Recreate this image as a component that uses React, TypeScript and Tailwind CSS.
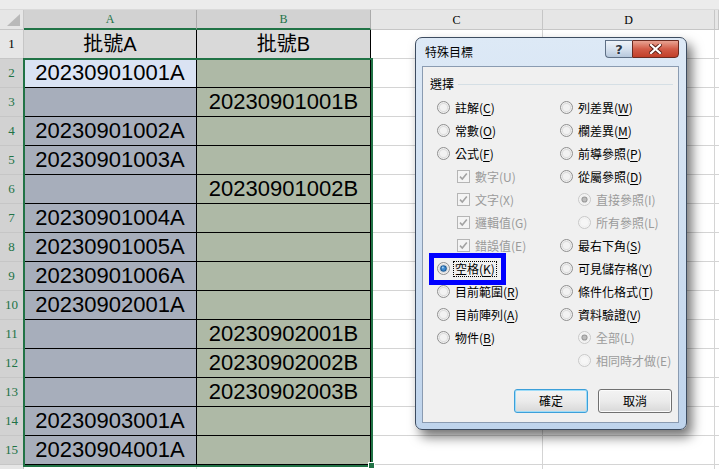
import React from "react";

const rows: [string, string][] = [
  ["批號A", "批號B"],
  ["20230901001A", ""],
  ["", "20230901001B"],
  ["20230901002A", ""],
  ["20230901003A", ""],
  ["", "20230901002B"],
  ["20230901004A", ""],
  ["20230901005A", ""],
  ["20230901006A", ""],
  ["20230902001A", ""],
  ["", "20230902001B"],
  ["", "20230902002B"],
  ["", "20230902003B"],
  ["20230903001A", ""],
  ["20230904001A", ""],
  ["", ""],
];

type Opt = {
  l: string;
  k: string;
  kind?: "radio" | "check";
  checked?: boolean;
  disabled?: boolean;
  indent?: boolean;
  focus?: boolean;
};

const leftOpts: Opt[] = [
  { l: "註解", k: "C" },
  { l: "常數", k: "O" },
  { l: "公式", k: "F" },
  { l: "數字", k: "U", kind: "check", checked: true, disabled: true, indent: true },
  { l: "文字", k: "X", kind: "check", checked: true, disabled: true, indent: true },
  { l: "邏輯值", k: "G", kind: "check", checked: true, disabled: true, indent: true },
  { l: "錯誤值", k: "E", kind: "check", checked: true, disabled: true, indent: true },
  { l: "空格", k: "K", checked: true, focus: true },
  { l: "目前範圍", k: "R" },
  { l: "目前陣列", k: "A" },
  { l: "物件", k: "B" },
];

const rightOpts: Opt[] = [
  { l: "列差異", k: "W" },
  { l: "欄差異", k: "M" },
  { l: "前導參照", k: "P" },
  { l: "從屬參照", k: "D" },
  { l: "直接參照", k: "I", disabled: true, checked: true, indent: true },
  { l: "所有參照", k: "L", disabled: true, indent: true },
  { l: "最右下角", k: "S" },
  { l: "可見儲存格", k: "Y" },
  { l: "條件化格式", k: "T" },
  { l: "資料驗證", k: "V" },
  { l: "全部", k: "L", disabled: true, checked: true, indent: true },
  { l: "相同時才做", k: "E", disabled: true, indent: true },
];

function Radio({ checked, disabled }: { checked?: boolean; disabled?: boolean }) {
  return (
    <svg width="13" height="13" viewBox="0 0 13 13" className="shrink-0">
      <circle cx="6.5" cy="6.5" r="6" fill={disabled ? "#f4f4f4" : "#f0f0f0"} stroke={disabled ? "#c8c8c8" : "#8f8f8f"} strokeWidth="1" />
      <circle cx="6.5" cy="6.5" r="4.6" fill={disabled ? "#f0f0f0" : "#dcdcdc"} />
      <circle cx="6.5" cy="6.5" r="3.6" fill={disabled ? "#f6f6f6" : "#f2f2f2"} />
      {checked && !disabled && (
        <>
          <circle cx="6.5" cy="6.5" r="3.3" fill="#1d5a94" />
          <circle cx="6.5" cy="6.5" r="2.2" fill="#3d8ad0" />
          <circle cx="5.8" cy="5.6" r="1" fill="#a9d3f5" />
        </>
      )}
      {checked && disabled && (
        <>
          <circle cx="6.5" cy="6.5" r="3.1" fill="#9a9a9a" />
          <circle cx="6.5" cy="6.5" r="2" fill="#bdbdbd" />
        </>
      )}
    </svg>
  );
}

function Check() {
  return (
    <svg width="13" height="13" viewBox="0 0 13 13" className="shrink-0">
      <rect x="0.5" y="0.5" width="12" height="12" fill="#f4f4f4" stroke="#b5b5b5" />
      <path d="M3 6.6 L5.3 9 L9.8 3.6" fill="none" stroke="#a3a3a3" strokeWidth="1.6" />
    </svg>
  );
}

function Option({ o, right }: { o: Opt; right?: boolean }) {
  const color = o.disabled ? "text-[#9b9b9b]" : "text-black";
  const indent = o.indent ? (right ? "pl-[18px]" : "pl-[20px]") : "";
  const label = (
    <span className={`${color} whitespace-nowrap`}>
      {o.l}(
      {o.disabled ? o.k : <span className="underline underline-offset-[2px]">{o.k}</span>})
    </span>
  );
  return (
    <div className={`h-[23px] flex items-center gap-[5px] ${indent}`}>
      {o.kind === "check" ? <Check /> : <Radio checked={o.checked} disabled={o.disabled} />}
      {o.focus ? (
        <span className="border border-dotted border-black px-[1px] leading-[14px] -ml-[2px]">{label}</span>
      ) : (
        label
      )}
    </div>
  );
}

function Button({ children, primary }: { children: React.ReactNode; primary?: boolean }) {
  return (
    <div
      className={`w-[74px] h-[24px] rounded-[3px] flex items-center justify-center text-[12px] text-black bg-gradient-to-b from-[#f3f3f3] via-[#ebebeb] to-[#d8d8d8] border ${
        primary ? "border-[#3c9fd9] shadow-[inset_0_0_0_1px_#9edcf8]" : "border-[#707070] shadow-[inset_0_0_0_1px_#fbfbfb]"
      }`}
    >
      {children}
    </div>
  );
}

function Dialog() {
  return (
    <div className="absolute left-[415px] top-[37px] w-[272px] h-[393px] rounded-[7px] border border-[#3d4c60] bg-gradient-to-b from-[#dde9f6] via-[#cfdff1] to-[#bfd4ec] shadow-[5px_7px_12px_rgba(0,0,0,0.55)] flex flex-col pl-[6px] pr-[7px] pb-[6px] font-['Noto_Sans_CJK_TC','Noto_Sans',sans-serif] text-[12px]">
      <div className="h-[28px] flex items-start justify-between">
        <div className="pl-[3px] pt-[6px] text-[12px] text-black leading-[16px]">特殊目標</div>
        <div className="flex mt-[2px]">
          <div className="w-[27px] h-[18px] rounded-bl-[4px] border border-[#5e6f85] border-r-0 bg-gradient-to-b from-[#eef3f9] via-[#d6e1ee] to-[#b7c8dc] flex items-center justify-center">
            <span className="font-['DejaVu_Sans',sans-serif] font-bold text-[13px] leading-none text-[#2e3744] [text-shadow:0_0_2px_#fff]">?</span>
          </div>
          <div className="w-[47px] h-[18px] rounded-br-[4px] border border-[#6a2a20] bg-gradient-to-b from-[#e8a393] via-[#d25c48] to-[#c13f29] flex items-center justify-center">
            <svg width="13" height="10" viewBox="0 0 13 10">
              <path d="M2 1 L11 9 M11 1 L2 9" stroke="#5a1f16" strokeWidth="4" strokeLinecap="square" />
              <path d="M2 1 L11 9 M11 1 L2 9" stroke="#ffffff" strokeWidth="2.2" strokeLinecap="square" />
            </svg>
          </div>
        </div>
      </div>
      <div className="flex-1 bg-[#f0f0f0] border border-[#8a9bb1] flex flex-col">
        <div className="pt-[9px] pl-[7px] pr-[5px] h-[25px] flex items-center gap-[4px]">
          <span className="text-black leading-[16px]">選擇</span>
          <div className="flex-1 h-px bg-[#d5dfe5]"></div>
        </div>
        <div className="mt-[4px] pl-[14px] grid grid-cols-[123px_1fr]">
          <div className="flex flex-col">
            {leftOpts.map((o, i) => (
              <Option key={i} o={o} />
            ))}
          </div>
          <div className="flex flex-col">
            {rightOpts.map((o, i) => (
              <Option key={i} o={o} right />
            ))}
          </div>
        </div>
        <div className="flex-1" />
        <div className="flex justify-end gap-[10px] pr-[6px] pb-[9px]">
          <Button primary>確定</Button>
          <Button>取消</Button>
        </div>
      </div>
    </div>
  );
}

export default function App() {
  const hdrFont = "font-['Liberation_Serif',serif]";
  return (
    <div className="relative w-[719px] h-[469px] overflow-hidden bg-white font-['Liberation_Sans','Noto_Sans_CJK_TC',sans-serif]">
      <div className="h-[10px] bg-[#ececec] border-b border-[#dadada]" />
      <div className="grid grid-cols-[24px_173px_174px_172px_172px_4px] grid-rows-[20px_repeat(16,29px)]">
        <div className="bg-[#e6e6e6] border-r border-b border-[#c6c6c6] relative">
          <svg width="15" height="13" viewBox="0 0 15 13" className="absolute right-[2px] bottom-[2px]">
            <polygon points="14,0 14,12 1,12" fill="#b9b9b9" />
          </svg>
        </div>
        {["A", "B"].map((c) => (
          <div
            key={c}
            className={`bg-[#d2d2d2] border-r border-[#ababab] border-b-2 border-b-[#217346] flex items-center justify-center text-[12px] text-[#217346] ${hdrFont}`}
          >
            {c}
          </div>
        ))}
        {["C", "D", ""].map((c, i) => (
          <div
            key={i}
            className={`bg-[#e6e6e6] border-r border-b border-[#c6c6c6] flex items-center justify-center text-[12px] text-black ${hdrFont}`}
          >
            {c}
          </div>
        ))}
        {rows.map((r, i) => {
          const rn = i + 1;
          const sel = rn >= 2 && rn <= 15;
          const isHead = rn === 1;
          const aBg = isHead ? "bg-[#d9d9d9]" : rn === 2 ? "bg-[#dae3f3]" : rn <= 15 ? "bg-[#a7aebb]" : "bg-white";
          const bBg = isHead ? "bg-[#d9d9d9]" : rn <= 15 ? "bg-[#aeb9a6]" : "bg-white";
          const cellBorder = rn <= 15 ? "border-black" : "border-[#d4d4d4]";
          const txt = isHead ? "text-[20px]" : "text-[22px]";
          return (
            <React.Fragment key={i}>
              <div
                className={`${sel ? "bg-[#d2d2d2] text-[#217346]" : "bg-[#e6e6e6] text-black"} border-r border-b border-[#c6c6c6] flex items-center justify-center text-[13px] ${hdrFont}`}
              >
                {rn <= 15 ? rn : ""}
              </div>
              <div className={`${aBg} border-r border-b ${cellBorder} flex items-center justify-center ${txt} text-black leading-none`}>
                {r[0]}
              </div>
              <div className={`${bBg} border-r border-b ${cellBorder} flex items-center justify-center ${txt} text-black leading-none`}>
                {r[1]}
              </div>
              <div className="bg-white border-r border-b border-[#d4d4d4]" />
              <div className="bg-white border-r border-b border-[#d4d4d4]" />
              <div className="bg-white border-b border-[#d4d4d4]" />
            </React.Fragment>
          );
        })}
      </div>
      <div className="absolute left-[23px] top-[58px] w-[350px] h-[409px] border-2 border-[#217346] pointer-events-none" />
      <div className="absolute left-[368px] top-[462px] w-[7px] h-[7px] bg-[#217346] border border-white" />
      <Dialog />
      <div className="absolute left-[429px] top-[253px] w-[77px] h-[32px] border-[5px] border-[#0000ff]" />
    </div>
  );
}
